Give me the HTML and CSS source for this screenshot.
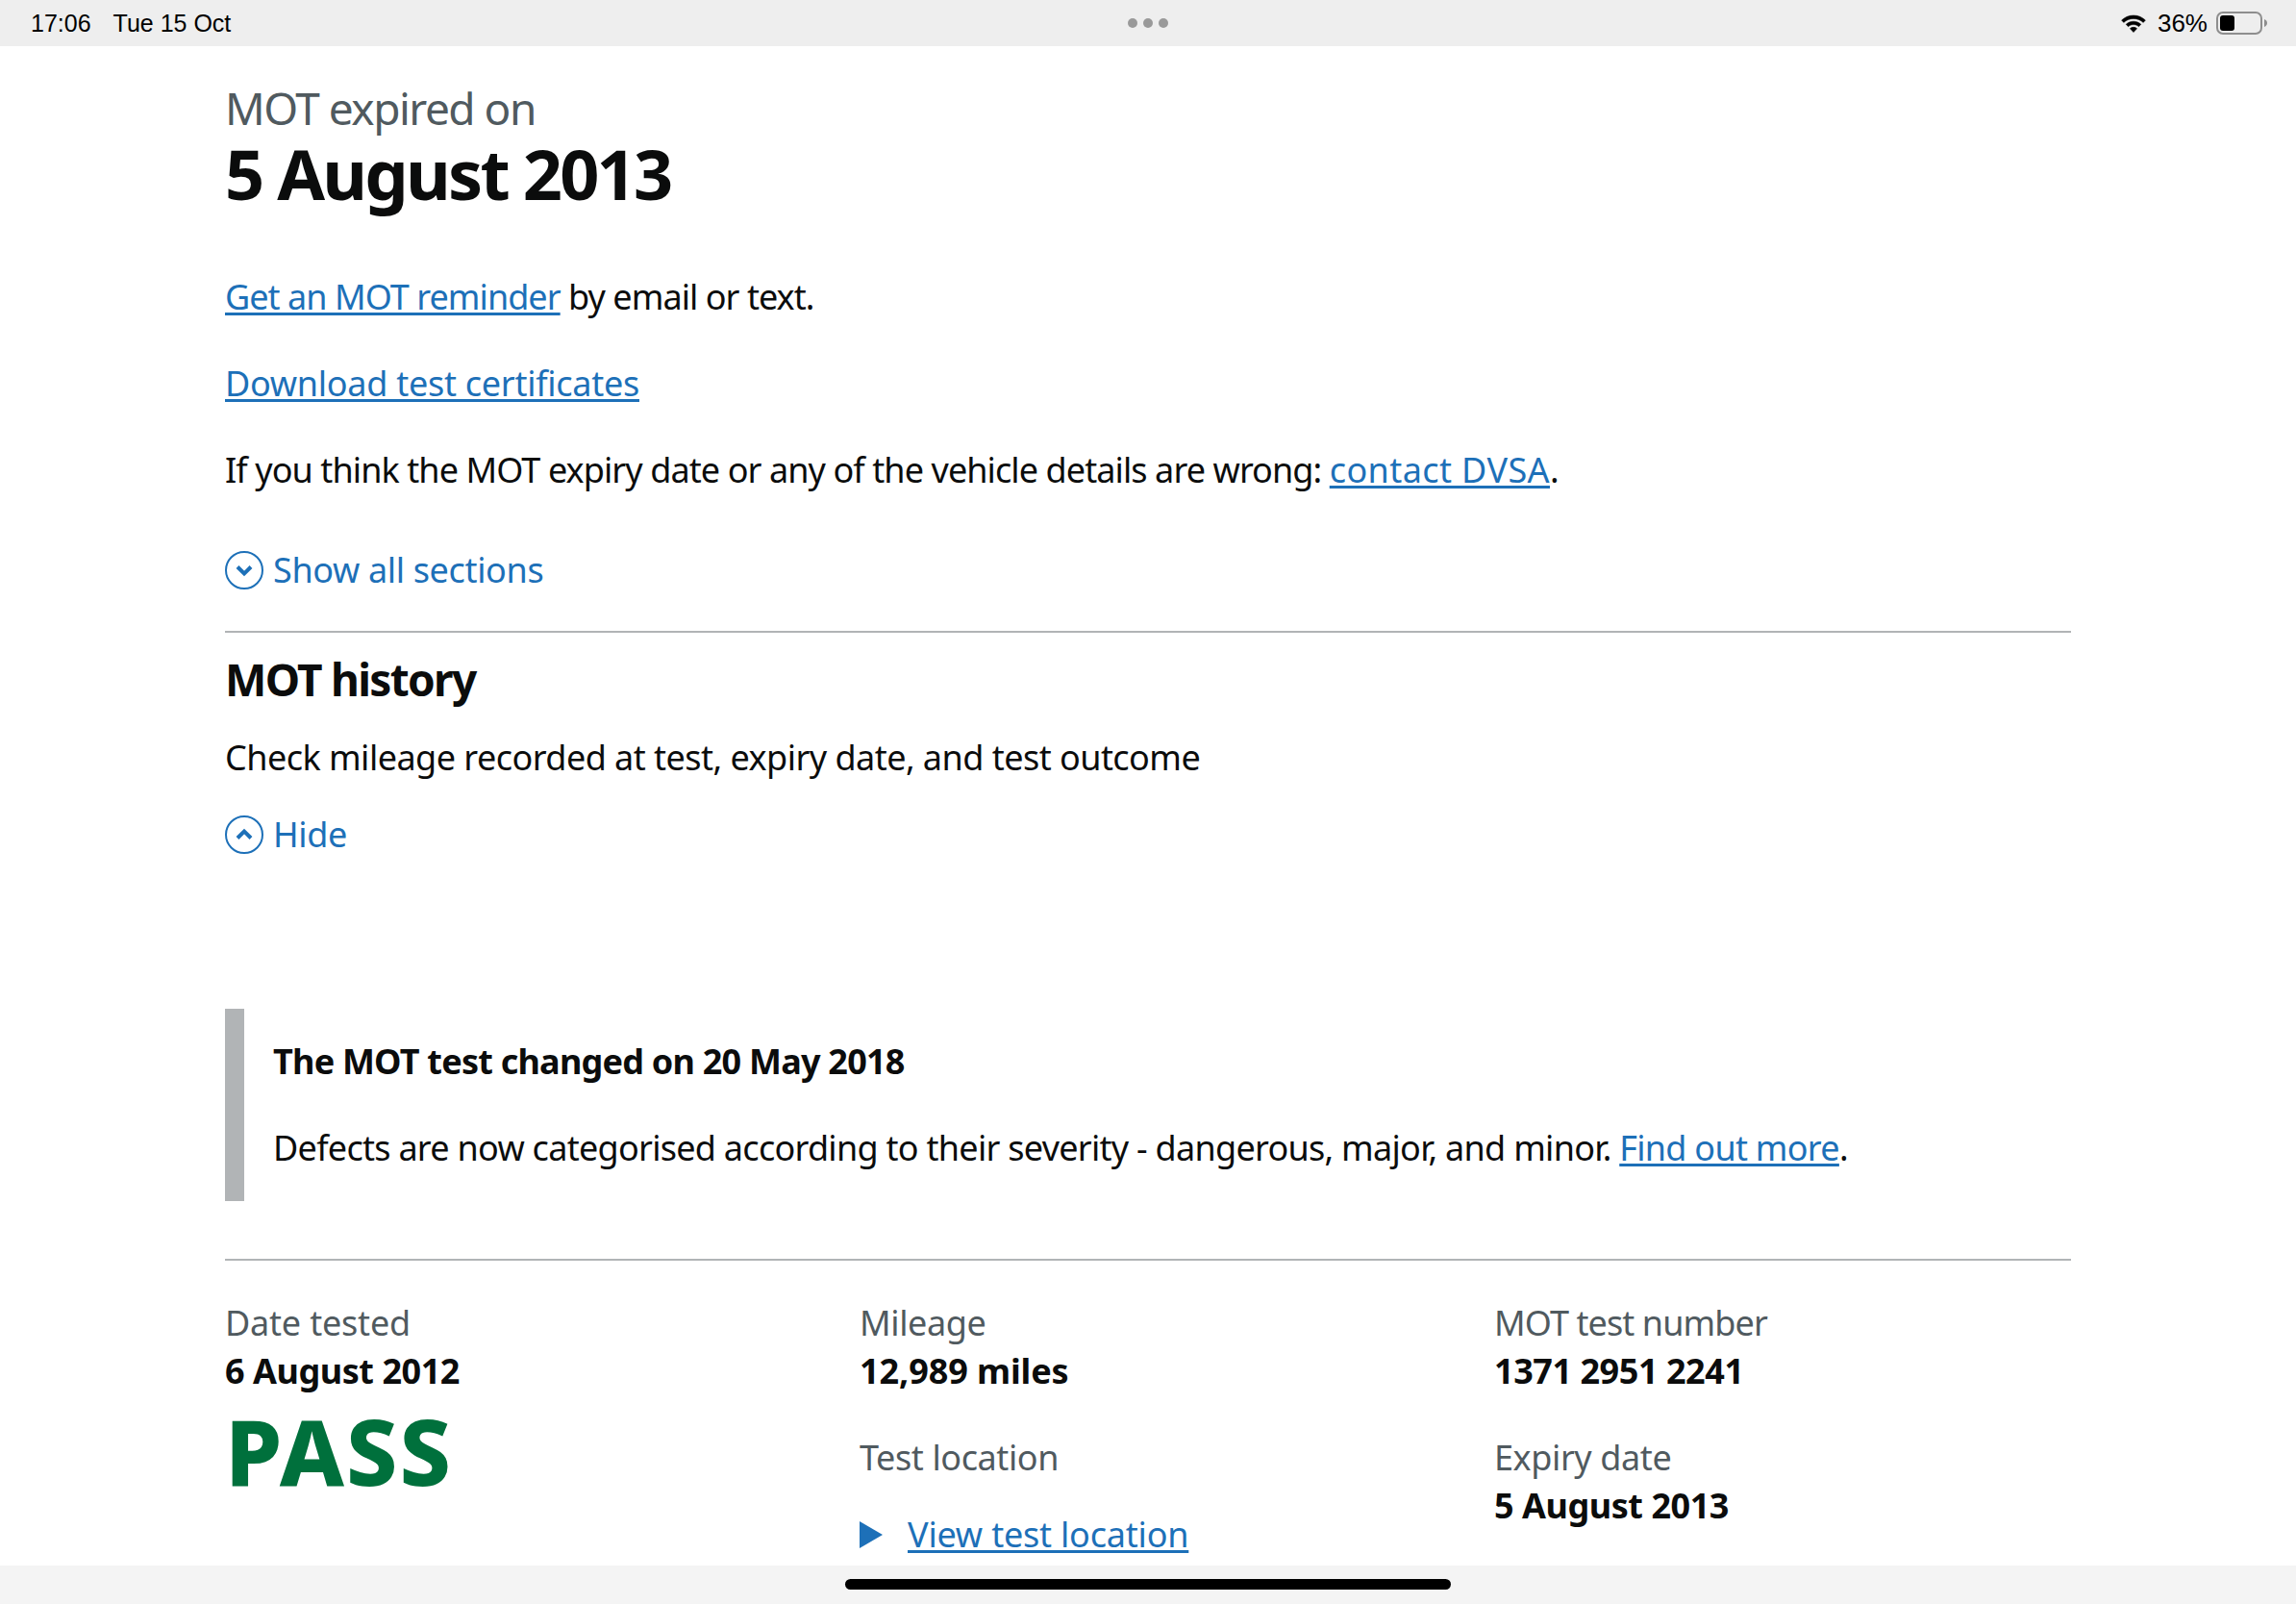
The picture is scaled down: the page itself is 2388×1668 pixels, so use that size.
FILE: index.html
```html
<!DOCTYPE html>
<html lang="en">
<head>
<meta charset="utf-8">
<title>MOT history</title>
<link rel="stylesheet" href="styles.css">
</head>
<body>
<div class="app">
  <header class="statusbar">
    <div class="status-left"><span>17:06</span><span>Tue 15 Oct</span></div>
    <div class="dots"><i></i><i></i><i></i></div>
    <div class="status-right">
      <svg class="wifi" width="28" height="22" viewBox="0 0 28 22"><path d="M14 3C9.2 3 5 4.9 1.6 8l2.2 2.4C6.6 7.9 10.100 6.400 14 6.400s7.400 1.500 10.200 4L26.400 8C23 4.900 18.800 3 14 3zM14 9.200c-3 0-5.700 1.200-7.800 3.100l2.300 2.400c1.500-1.300 3.400-2.100 5.500-2.100s4 .8 5.500 2.100l2.300-2.400C19.700 10.400 17 9.200 14 9.200zM14 15.300c-1.400 0-2.600.5-3.600 1.400L14 20.600l3.600-3.900c-1-.9-2.200-1.400-3.600-1.400z" fill="#000" stroke="#000" stroke-width=".5"/></svg>
      <span>36%</span>
      <svg class="battery" width="54" height="26" viewBox="0 0 54 26"><rect x="1" y="2" width="46" height="22" rx="6" fill="none" stroke="#8e8e8e" stroke-width="2"/><rect x="4" y="5" width="15" height="16" rx="3" fill="#000"/><path d="M50 9c2 .8 3 2.200 3 4s-1 3.200-3 4z" fill="#8e8e8e"/></svg>
    </div>
  </header>
  <main class="content">
    <p class="eyebrow">MOT expired on</p>
    <h1 class="expiry">5 August 2013</h1>
    <p class="body first"><a href="#">Get an MOT reminder</a> by email or text.</p>
    <p class="body loose"><a href="#">Download test certificates</a></p>
    <p class="body long">If you think the MOT expiry date or any of the vehicle details are wrong: <a href="#">contact DVSA</a>.</p>
    <div class="toggle all">
      <svg width="40" height="40" viewBox="0 0 40 40"><circle cx="20" cy="20" r="19" fill="none" stroke="#1d70b8" stroke-width="2"/><path d="M13 16.500l7 7 7-7" fill="none" stroke="#1d70b8" stroke-width="4"/></svg>
      <span>Show all sections</span>
    </div>
    <section class="section">
      <h2 class="section-title">MOT history</h2>
      <p class="section-sub">Check mileage recorded at test, expiry date, and test outcome</p>
      <div class="toggle hide">
        <svg width="40" height="40" viewBox="0 0 40 40"><circle cx="20" cy="20" r="19" fill="none" stroke="#1d70b8" stroke-width="2"/><path d="M13 23.500l7-7 7 7" fill="none" stroke="#1d70b8" stroke-width="4"/></svg>
        <span>Hide</span>
      </div>
    </section>
    <aside class="inset">
      <p class="inset-title">The MOT test changed on 20 May 2018</p>
      <p class="inset-text">Defects are now categorised according to their severity - dangerous, major, and minor. <a href="#">Find out more</a>.</p>
    </aside>
    <section class="result">
      <div class="col">
        <p class="label wide">Date tested</p>
        <p class="value">6 August 2012</p>
        <p class="pass">PASS</p>
      </div>
      <div class="col">
        <p class="label">Mileage</p>
        <p class="value wide">12,989 miles</p>
        <p class="label lower">Test location</p>
        <p class="details"><span class="tri"></span><a href="#">View test location</a></p>
      </div>
      <div class="col">
        <p class="label narrow">MOT test number</p>
        <p class="value">1371 2951 2241</p>
        <p class="label lower">Expiry date</p>
        <p class="value">5 August 2013</p>
      </div>
    </section>
  </main>
  <footer class="homebar"><div class="home-indicator"></div></footer>
</div>
</body>
</html>
```
FILE: styles.css
```css
* { box-sizing: border-box; }
html, body { margin: 0; padding: 0; background: #fff; }
body { font-family: "Noto Sans", "Open Sans", sans-serif; color: #0b0c0c; }
p, h1, h2 { margin: 0; }
a { color: #1d70b8; text-decoration: underline; text-decoration-thickness: 3px; text-underline-offset: 3px; text-decoration-skip-ink: none; }
.app { width: 2388px; height: 1668px; display: flex; flex-direction: column; overflow: hidden; }
.statusbar { height: 48px; flex: none; background: #eeeeee; display: grid; grid-template-columns: 1fr auto 1fr; align-items: center; padding: 0 29px 0 32px; font-family: "Liberation Sans", sans-serif; font-size: 25px; color: #000; }
.status-left { display: flex; gap: 23px; }
.status-right { display: flex; align-items: center; justify-content: flex-end; gap: 9px; font-size: 26px; }
.wifi { margin-right: 2px; }
.dots { display: flex; gap: 6px; margin-left: -3px; }
.dots i { width: 10px; height: 10px; border-radius: 50%; background: #999; }
.content { flex: 1; min-height: 0; overflow: hidden; padding: 36px 234px 0; }
.eyebrow { font-size: 46px; line-height: 56px; color: #505a5f; letter-spacing: -1.5px; }
.expiry { font-size: 72px; line-height: 80px; font-weight: 700; letter-spacing: -2.8px; }
.body { font-size: 36px; line-height: 50px; margin-bottom: 40px; letter-spacing: -.72px; }
.body.first { margin-top: 64px; letter-spacing: -.95px; }
.body.loose { letter-spacing: -.27px; }
.body.long { letter-spacing: -.91px; }
.body.long a { letter-spacing: .4px; }
.toggle { display: flex; align-items: center; gap: 10px; font-size: 36px; line-height: 50px; color: #1d70b8; letter-spacing: -.35px; }
.toggle.all { margin-top: 54px; }
.toggle.hide { margin-top: 30px; }
.section { margin-top: 38px; border-top: 2px solid #b1b4b6; }
.section-title { font-size: 46px; line-height: 60px; font-weight: 700; margin-top: 18px; letter-spacing: -1.7px; }
.section-sub { font-size: 36px; line-height: 50px; margin-top: 27px; letter-spacing: -.53px; }
.inset { margin-top: 156px; height: 200px; border-left: 20px solid #b1b4b6; padding: 30px 0 0 30px; }
.inset-title { font-size: 36px; line-height: 50px; font-weight: 700; letter-spacing: -.77px; }
.inset-text { font-size: 36px; line-height: 50px; margin-top: 40px; letter-spacing: -.72px; }
.result { margin-top: 60px; border-top: 2px solid #b1b4b6; padding-top: 40px; display: grid; grid-template-columns: repeat(3, 660px); }
.label { font-size: 36px; line-height: 50px; color: #505a5f; letter-spacing: -.4px; }
.label.wide { letter-spacing: -.2px; }
.label.narrow { letter-spacing: -.9px; }
.label.lower { margin-top: 40px; }
.value { font-size: 36px; line-height: 50px; font-weight: 700; letter-spacing: -.45px; }
.value.wide { letter-spacing: -.1px; }
.pass { font-size: 95px; line-height: 100px; font-weight: 800; color: #00703c; margin-top: 7px; letter-spacing: 2px; }
.details { font-size: 36px; line-height: 50px; margin-top: 30px; display: flex; align-items: center; gap: 26px; letter-spacing: -.2px; }
.tri { width: 0; height: 0; border-left: 24px solid #1d70b8; border-top: 14px solid transparent; border-bottom: 14px solid transparent; }
.homebar { height: 40px; flex: none; background: #f4f4f4; display: flex; justify-content: center; padding-top: 14px; }
.home-indicator { width: 630px; height: 11px; border-radius: 6px; background: #000; }
```
